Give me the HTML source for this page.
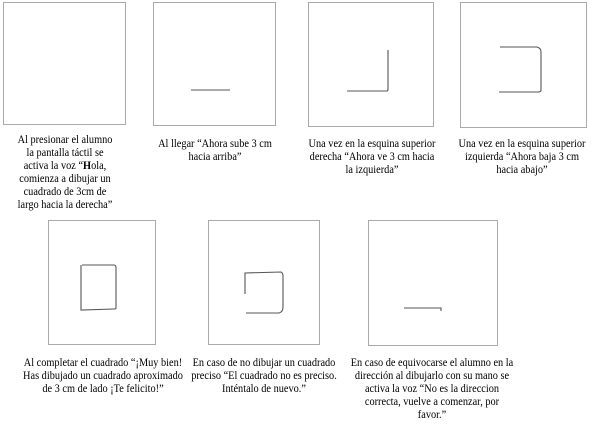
<!DOCTYPE html>
<html><head><meta charset="utf-8"><style>
body{margin:0;width:598px;height:424px;background:#fff;position:relative;overflow:hidden;font-family:"Liberation Serif",serif;font-size:12px;line-height:13px;color:#000}
.b{position:absolute;border:1px solid #aaa;box-sizing:border-box}
.t{position:absolute;text-align:center;white-space:nowrap;transform:scaleX(0.86);transform-origin:center top}
svg{position:absolute;left:0;top:0}
</style></head><body>
<div class="b" style="left:3px;top:2px;width:123px;height:123px"></div>
<div class="b" style="left:153px;top:2px;width:123px;height:124px"></div>
<div class="b" style="left:308px;top:2px;width:126px;height:125px"></div>
<div class="b" style="left:460px;top:2px;width:127px;height:126px"></div>
<div class="b" style="left:48px;top:220px;width:108px;height:125px"></div>
<div class="b" style="left:208px;top:220px;width:112px;height:125px"></div>
<div class="b" style="left:368px;top:220px;width:130px;height:126px"></div>
<svg width="598" height="424" fill="none" stroke="#555" stroke-width="1.1">
<path d="M191 90H230"/>
<path d="M347 91H387Q388 91 388 89V50"/>
<path d="M500 47H537Q541 48 541 52V90Q541 92 538 92H499"/>
<path d="M82 265H114Q116 265 116 268V308Q116 309 114 309L81 310V265"/>
<path d="M245 294V273L281 272Q283 273 283 276V307Q283 312 279 313H246"/>
<path d="M404 308H441V311"/>
</svg>
<div class="t" style="left:-10px;top:133px;width:150px">Al presionar el alumno<br>la pantalla táctil se<br>activa la voz “<b>H</b>ola,<br>comienza a dibujar un<br>cuadrado de 3cm de<br>largo hacia la derecha”</div>
<div class="t" style="left:140px;top:137px;width:150px">Al llegar “Ahora sube 3 cm<br>hacia arriba”</div>
<div class="t" style="left:287px;top:137px;width:170px">Una vez en la esquina superior<br>derecha “Ahora ve 3 cm hacia<br>la izquierda”</div>
<div class="t" style="left:437px;top:137px;width:170px">Una vez en la esquina superior<br>izquierda “Ahora baja 3 cm<br>hacia abajo”</div>
<div class="t" style="left:8px;top:356px;width:190px">Al completar el cuadrado “¡Muy bien!<br>Has dibujado un cuadrado aproximado<br>de 3 cm de lado ¡Te felicito!”</div>
<div class="t" style="left:177px;top:356px;width:174px">En caso de no dibujar un cuadrado<br>preciso “El cuadrado no es preciso.<br>Inténtalo de nuevo.”</div>
<div class="t" style="left:332px;top:356px;width:200px">En caso de equivocarse el alumno en la<br>dirección al dibujarlo con su mano se<br>activa la voz “No es la direccion<br>correcta, vuelve a comenzar, por<br>favor.”</div>
</body></html>
